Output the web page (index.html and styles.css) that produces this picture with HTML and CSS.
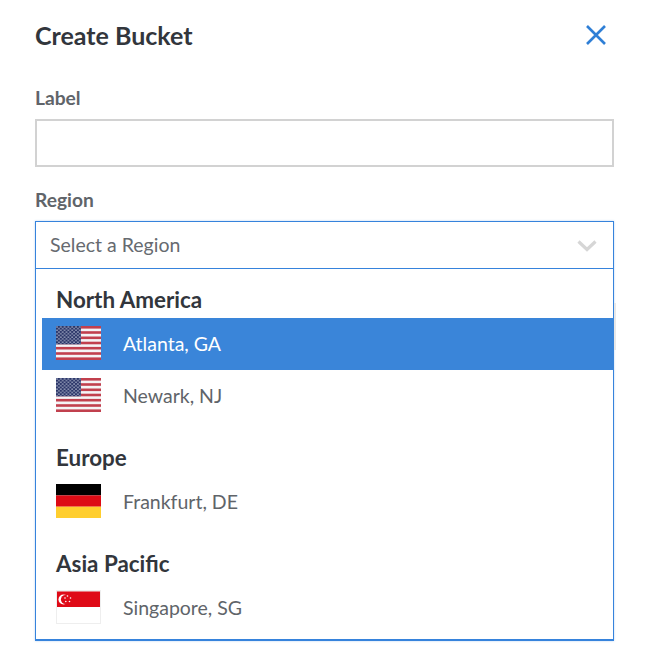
FILE: index.html
```html
<!DOCTYPE html>
<html lang="en">
<head>
<meta charset="utf-8">
<title>Create Bucket</title>
<link rel="stylesheet" href="styles.css">
</head>
<body>
<svg class="defs" width="0" height="0" aria-hidden="true">
  <defs>
    <pattern id="stars" width="3.8" height="3.4" patternUnits="userSpaceOnUse">
      <circle cx="1" cy="0.9" r="0.75" fill="#c9cfe0"/>
      <circle cx="2.9" cy="2.6" r="0.75" fill="#c9cfe0"/>
    </pattern>
    <symbol id="flag-us" viewBox="0 0 45 34">
      <rect width="45" height="34" fill="#f4f4f6"/>
      <g fill="#c1404e">
        <rect y="0" width="45" height="2.6"/>
        <rect y="5.2" width="45" height="2.6"/>
        <rect y="10.5" width="45" height="2.6"/>
        <rect y="15.7" width="45" height="2.6"/>
        <rect y="20.9" width="45" height="2.6"/>
        <rect y="26.2" width="45" height="2.6"/>
        <rect y="31.4" width="45" height="2.6"/>
      </g>
      <rect width="25" height="18.3" fill="#2a3568"/>
      <rect width="25" height="18.3" fill="url(#stars)"/>
    </symbol>
  </defs>
</svg>
<main class="drawer">
  <header class="drawer-head">
    <h1 class="title">Create Bucket</h1>
    <button class="close" type="button" aria-label="Close">
      <svg width="20" height="20" viewBox="0 0 20 20"><path d="M1 1 L19 19 M19 1 L1 19" fill="none" stroke="#2f7fd6" stroke-width="2.6"/></svg>
    </button>
  </header>

  <div class="field">
    <label class="field-label">Label</label>
    <input class="text-input" type="text">
  </div>

  <div class="field">
    <label class="field-label">Region</label>
    <div class="select">
      <div class="select-control">
        <span class="placeholder">Select a Region</span>
        <svg class="chevron" width="20" height="12" viewBox="0 0 20 12"><path d="M1.5 1.5 L10 9.500 L18.500 1.500" fill="none" stroke="#d6d6d6" stroke-width="3.2"/></svg>
      </div>
      <div class="menu">
        <span class="scroll-thumb"></span>
        <section class="group">
          <h2 class="group-title">North America</h2>
          <div class="option is-active">
            <svg class="flag" width="45" height="34"><use href="#flag-us"/></svg>
            <span>Atlanta, GA</span>
          </div>
          <div class="option">
            <svg class="flag" width="45" height="34"><use href="#flag-us"/></svg>
            <span>Newark, NJ</span>
          </div>
        </section>
        <section class="group">
          <h2 class="group-title">Europe</h2>
          <div class="option">
            <svg class="flag" width="45" height="34" viewBox="0 0 45 34">
              <rect width="45" height="11.4" fill="#000"/>
              <rect y="11.4" width="45" height="11.3" fill="#dd0b15"/>
              <rect y="22.7" width="45" height="11.3" fill="#ffce2e"/>
            </svg>
            <span>Frankfurt, DE</span>
          </div>
        </section>
        <section class="group">
          <h2 class="group-title">Asia Pacific</h2>
          <div class="option">
            <svg class="flag" width="45" height="34" viewBox="0 0 45 34">
              <rect width="45" height="34" fill="#eeeeee"/>
              <rect x="1" y="17" width="43" height="16" fill="#ffffff"/>
              <rect x="1" y="1.500" width="43" height="15.500" fill="#df0a17"/>
              <circle cx="7.500" cy="9.500" r="5" fill="#ffffff"/>
              <circle cx="9.500" cy="9.500" r="4.600" fill="#df0a17"/>
              <g fill="#ffffff">
                <circle cx="11.500" cy="6" r="0.800"/>
                <circle cx="14.500" cy="8" r="0.800"/>
                <circle cx="13.500" cy="11.500" r="0.800"/>
                <circle cx="9.800" cy="11.500" r="0.800"/>
                <circle cx="9" cy="8" r="0.800"/>
              </g>
            </svg>
            <span>Singapore, SG</span>
          </div>
        </section>
      </div>
    </div>
  </div>
</main>
</body>
</html>
```
FILE: styles.css
```css
* { box-sizing: border-box; }

html, body {
  margin: 0;
  padding: 0;
  background: #fff;
}

body {
  font-family: Lato, "Liberation Sans", sans-serif;
}

.defs {
  position: absolute;
}

.drawer {
  width: 660px;
  height: 667px;
  padding: 19px 46px 0 35px;
  overflow: hidden;
}

.drawer-head {
  display: flex;
  align-items: center;
  justify-content: space-between;
  height: 32px;
  margin-bottom: 37px;
}

.title {
  margin: 0;
  font-size: 25px;
  line-height: 32px;
  font-weight: 700;
  color: #32363c;
}

.close {
  display: flex;
  width: 20px;
  height: 20px;
  margin: 0 8px 1px 0;
  padding: 0;
  border: 0;
  background: none;
}

.field + .field {
  margin-top: 23px;
}

.field-label {
  display: block;
  height: 31px;
  font-size: 19.2px;
  line-height: 20px;
  font-weight: 700;
  color: #606469;
}

.text-input {
  display: block;
  width: 579px;
  height: 48px;
  border: 2px solid #d2d2d2;
  border-radius: 0;
  background: #fff;
  outline: 0;
}

.select {
  width: 579px;
  box-shadow: 0 0 2px rgba(54, 131, 220, 0.35);
}

.select-control {
  display: flex;
  align-items: center;
  justify-content: space-between;
  height: 48px;
  padding: 0 16px 2px 14px;
  border: 1px solid #3683dc;
}

.placeholder {
  font-size: 19.500px;
  color: #666a70;
}

.chevron {
  margin-top: 4px;
}

.menu {
  position: relative;
  height: 372px;
  padding-top: 13px;
  border: 1px solid #3683dc;
  border-top: 0;
  border-bottom-width: 2px;
}

.scroll-thumb {
  position: absolute;
  top: 34px;
  right: -3px;
  width: 2px;
  height: 47px;
  background: #e8e8e8;
}

.group + .group {
  margin-top: 18px;
}

.group-title {
  margin: 0 0 0 20px;
  height: 36px;
  font-size: 22.400px;
  line-height: 36px;
  font-weight: 700;
  color: #32363c;
}

.option {
  display: flex;
  align-items: center;
  gap: 22px;
  height: 52px;
  margin: 0 -1px 0 6px;
  padding: 0 0 2px 14px;
  font-size: 19.500px;
  color: #606469;
}

.option.is-active {
  background: #3a85d9;
  color: #fff;
}

.flag {
  flex: none;
  display: block;
}
```
